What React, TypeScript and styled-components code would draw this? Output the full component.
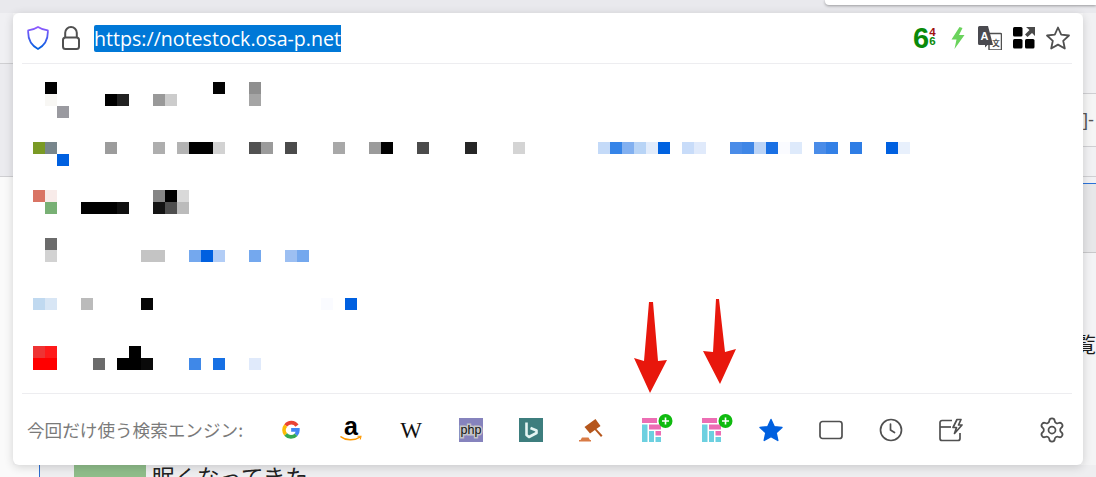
import styled, { createGlobalStyle } from "styled-components";
import { Settings } from "lucide-react";

const GlobalStyle = createGlobalStyle`
  html, body {
    margin: 0;
    padding: 0;
    width: 1096px;
    height: 477px;
    overflow: hidden;
    background: #f7f7f8;
    font-family: "Noto Sans", "Noto Sans CJK JP", sans-serif;
  }
`;

const Page = styled.div`
  position: relative;
  width: 1096px;
  height: 477px;
  overflow: hidden;
  display: flex;
  flex-direction: column;
`;

const TopStrip = styled.div`
  height: 13px;
  flex: none;
  background: #e9e9ed;
  display: flex;
  justify-content: flex-end;
`;

const TopTab = styled.div`
  width: 271px;
  height: 5px;
  background: #fff;
  border-bottom-left-radius: 4px;
  box-shadow: 0 1px 3px rgba(0, 0, 0, 0.35);
`;

const Middle = styled.div`
  flex: 1;
  display: flex;
  justify-content: space-between;
  min-height: 0;
`;

const LeftRail = styled.div`
  width: 13px;
  display: flex;
  flex-direction: column;
`;

const RightRail = styled.div`
  width: 13px;
  display: flex;
  flex-direction: column;
  font-family: "Liberation Sans", "Noto Sans CJK JP", sans-serif;
  background: #f4f4f5;
`;

const RailBand = styled.div<{ $h: number; $bg: string; $line?: string }>`
  height: ${(p) => p.$h}px;
  flex: none;
  box-sizing: border-box;
  background: ${(p) => p.$bg};
  border-bottom: ${(p) => (p.$line ? `1px solid ${p.$line}` : "none")};
  overflow: hidden;
`;

const RailBracket = styled.div`
  color: #555;
  font-size: 18px;
  line-height: 52px;
  white-space: nowrap;
`;

const RailGlyph = styled.div`
  color: #1c1c1c;
  font-size: 21px;
  line-height: 24px;
  margin-left: -8px;
  white-space: nowrap;
`;

const BottomStrip = styled.div`
  height: 12px;
  flex: none;
  display: flex;
  background: #eeeef0;
  overflow: hidden;
`;

const BottomLeft = styled.div`
  width: 40px;
  flex: none;
  box-sizing: border-box;
  background: #fafafa;
  border-right: 1px solid #2d6ed0;
`;

const Thumb = styled.div`
  width: 72px;
  height: 12px;
  margin-left: 34px;
  background: #8fbd8a;
  flex: none;
`;

const BottomText = styled.div`
  margin-left: 6px;
  font-size: 22.5px;
  line-height: 22px;
  color: #222;
  white-space: nowrap;
  font-family: "Noto Sans CJK JP", sans-serif;
`;

const Popup = styled.div`
  position: absolute;
  left: 13px;
  top: 13px;
  width: 1070px;
  height: 452px;
  box-sizing: border-box;
  padding: 0 11px 0 9px;
  background: #fff;
  border-radius: 6px;
  box-shadow: 0 2px 10px rgba(0, 0, 0, 0.16);
  display: flex;
  flex-direction: column;
`;

const Header = styled.div`
  height: 51px;
  flex: none;
  box-sizing: border-box;
  border-bottom: 1px solid #ededf0;
  display: flex;
  align-items: center;
  padding: 0 2px 0 5px;
`;

const ShieldSlot = styled.div`
  width: 22px;
  height: 24px;
  flex: none;
  margin-right: 13px;
`;

const LockSlot = styled.div`
  width: 18px;
  height: 24px;
  flex: none;
  margin-right: 14px;
`;

const UrlText = styled.span`
  background: #0078d7;
  color: #fff;
  font-size: 19.6px;
  line-height: 27px;
  height: 27px;
  white-space: nowrap;
  border-top-left-radius: 2px;
  border-bottom-left-radius: 2px;
  font-family: "Open Sans", sans-serif;
`;

const HeaderIcons = styled.div`
  margin-left: auto;
  display: flex;
  align-items: center;
`;

const Grade = styled.div`
  display: flex;
  width: 24px;
  height: 24px;
  margin-right: 9px;
  color: #0a8a0a;
  font-family: "Liberation Sans", sans-serif;
  font-weight: 700;
`;

const GradeBig = styled.span`
  font-size: 29px;
  line-height: 24px;
`;

const GradeSmall = styled.div`
  display: flex;
  flex-direction: column;
  font-size: 11.5px;
  line-height: 8.5px;
  padding-top: 2px;
`;

const GradeTop = styled.span`
  color: #a01010;
`;

const ToolIcon = styled.div<{ $mr?: number }>`
  width: 24px;
  height: 24px;
  flex: none;
  margin-right: ${(p) => p.$mr ?? 0}px;
  color: #505050;
`;

const Results = styled.div`
  flex: 1;
  min-height: 0;
  box-sizing: border-box;
  padding: 18px 0 0 11px;
`;

const Mosaic = styled.div`
  display: grid;
  grid-template-columns: repeat(74, 12px);
  grid-template-rows: repeat(24, 12px);
`;

// the blue run at the end of the second result sits 1px off the grid
const Tile = styled.div.attrs<{ $col: number; $row: number; $color: string }>((p) => ({
  style: {
    gridColumn: p.$col + 1,
    gridRow: p.$row + 1,
    background: p.$color,
    transform: p.$col >= 47 ? "translateX(1px)" : undefined,
  },
}))<{ $col: number; $row: number; $color: string }>``;

const Footer = styled.div`
  height: 72px;
  flex: none;
  box-sizing: border-box;
  border-top: 1px solid #ededf0;
  display: flex;
  align-items: center;
  padding: 0 6px 0 5px;
`;

const FooterLabel = styled.div`
  width: 252px;
  flex: none;
  font-size: 17.6px;
  color: #7a7a7a;
  white-space: nowrap;
  font-family: "Noto Sans CJK JP", sans-serif;
`;

const Engines = styled.div`
  display: flex;
  gap: 36px;
  align-items: center;
`;

const Engine = styled.div`
  width: 24px;
  height: 24px;
  flex: none;
  color: #505050;
  svg {
    display: block;
    overflow: visible;
  }
`;

const GearSlot = styled.div`
  margin-left: auto;
  width: 28px;
  height: 28px;
  color: #505050;
`;

const ArrowMark = styled.svg<{ $x: number; $y: number }>`
  position: absolute;
  left: ${(p) => p.$x}px;
  top: ${(p) => p.$y}px;
`;

// col, row on a 12px grid, starting at the first tile (33, 82)
const tiles: [number, number, string][] = [
  [1, 0, "#000"], [15, 0, "#030303"], [18, 0, "#8f8f8f"],
  [1, 1, "#f8f7f4"], [6, 1, "#000"], [7, 1, "#222"], [10, 1, "#999"], [11, 1, "#ccc"], [18, 1, "#a5a5a5"],
  [2, 2, "#9a9aa0"],

  [0, 5, "#7a9a25"], [1, 5, "#78868c"], [6, 5, "#9c9c9c"], [10, 5, "#aeaeae"], [12, 5, "#b3b3b3"],
  [13, 5, "#000"], [14, 5, "#000"], [15, 5, "#d2d2d2"], [18, 5, "#515151"], [19, 5, "#9b9b9b"],
  [21, 5, "#4b4b4b"], [25, 5, "#a8a8a8"], [28, 5, "#9b9b9b"], [29, 5, "#000"], [32, 5, "#4b4b4b"],
  [36, 5, "#262626"], [40, 5, "#d4d4d4"],
  [47, 5, "#c4daf8"], [48, 5, "#3584e8"], [49, 5, "#82b0f0"], [50, 5, "#b8d4f6"], [51, 5, "#e2ecfb"],
  [52, 5, "#0062e0"], [54, 5, "#c8dcf9"], [55, 5, "#e0eafb"], [58, 5, "#4a8ce8"], [59, 5, "#3f86e6"],
  [60, 5, "#bcd4f6"], [61, 5, "#1a70e4"], [62, 5, "#fafbff"], [63, 5, "#deeafb"], [65, 5, "#4a8ce8"],
  [66, 5, "#3380e6"], [68, 5, "#2e7de5"], [71, 5, "#0060e0"], [72, 5, "#e8f0fc"],
  [2, 6, "#0060e0"],

  [0, 9, "#d97464"], [1, 9, "#f8ebe9"], [10, 9, "#858585"], [11, 9, "#000"], [12, 9, "#d9d9d9"],
  [1, 10, "#78b074"], [4, 10, "#000"], [5, 10, "#000"], [6, 10, "#000"], [7, 10, "#0f0f0f"],
  [10, 10, "#131313"], [11, 10, "#4e4e4e"], [12, 10, "#bbb"],

  [1, 13, "#6b6b6b"],
  [1, 14, "#d2d2d2"], [9, 14, "#c4c4c4"], [10, 14, "#c4c4c4"], [13, 14, "#74a8ee"], [14, 14, "#0060e0"],
  [15, 14, "#b2cdf6"], [18, 14, "#74a8ee"], [21, 14, "#9cbff2"], [22, 14, "#74a8ee"],

  [0, 18, "#c0d9f0"], [1, 18, "#d8e6f5"], [4, 18, "#bbb"], [9, 18, "#060606"], [24, 18, "#fafbff"], [26, 18, "#0060e0"],

  [0, 22, "#ee3333"], [1, 22, "#ff1a1a"], [8, 22, "#000"],
  [0, 23, "#f00"], [1, 23, "#f00"], [5, 23, "#6b6b6b"], [7, 23, "#000"], [8, 23, "#000"], [9, 23, "#0a0a0a"],
  [13, 23, "#3f88e8"], [15, 23, "#1670e4"], [18, 23, "#e0eafb"],
];

const STAR_PATH = "M12 1.5 L15.2 8.6 L23 9.5 L17.2 14.8 L18.8 22.5 L12 18.6 L5.2 22.5 L6.8 14.8 L1 9.5 L8.8 8.6 Z";

function Shield() {
  return (
    <svg width="22" height="24" viewBox="0 0 22 24" fill="none">
      <defs>
        <linearGradient id="shieldGrad" x1="0" y1="0" x2="0" y2="1">
          <stop offset="0" stopColor="#9059ff" />
          <stop offset="1" stopColor="#0060df" />
        </linearGradient>
      </defs>
      <path
        d="M11 1 C8 3 4.5 4 1.2 4.3 C0.8 11 2.5 18.5 11 23 C19.5 18.5 21.2 11 20.8 4.3 C17.5 4 14 3 11 1 Z"
        stroke="url(#shieldGrad)"
        strokeWidth="1.8"
        strokeLinejoin="round"
      />
    </svg>
  );
}

function LockIcon() {
  return (
    <svg width="18" height="24" viewBox="0 0 18 24" fill="none" stroke="#505050" strokeWidth="2">
      <rect x="1" y="11.5" width="16" height="11.5" rx="2.5" />
      <path d="M3.2 11.5 V6.8 a5.8 5.8 0 0 1 11.6 0 V11.5" />
    </svg>
  );
}

function Bolt() {
  return (
    <svg width="24" height="24" viewBox="0 0 24 24">
      <path d="M13.5 1 L5.5 13.5 L10.5 13.5 L8.5 23 L18.5 9 L13 9 L16.5 2 Z" fill="#6ad35c" />
    </svg>
  );
}

function Translate() {
  return (
    <svg width="24" height="24" viewBox="0 0 24 24">
      <path d="M11 7.5 H22.5 a1 1 0 0 1 1 1 V23 a1 1 0 0 1 -1 1 H12 a1 1 0 0 1 -1 -1 Z" fill="#fff" stroke="#505050" strokeWidth="1.5" />
      <path d="M1.5 0 H10 L15 19 H9.5 L7 21.5 V19 H1.5 a1.5 1.5 0 0 1 -1.5 -1.5 V1.5 a1.5 1.5 0 0 1 1.5 -1.5 Z" fill="#4a4a50" />
      <text x="6.5" y="14" fontSize="11" fontWeight="700" fill="#fff" textAnchor="middle" fontFamily="Liberation Sans">A</text>
      <text x="18" y="20" fontSize="7.5" fontWeight="700" fill="#505050" textAnchor="middle" fontFamily="Noto Sans CJK JP">文</text>
    </svg>
  );
}

function QuickGrid() {
  return (
    <svg width="24" height="24" viewBox="0 0 24 24">
      <rect x="1" y="1" width="9.5" height="9.5" rx="1.5" fill="#000" />
      <rect x="1" y="13" width="9.5" height="9.5" rx="1.5" fill="#000" />
      <rect x="13" y="13" width="9.5" height="9.5" rx="1.5" fill="#000" />
      <path d="M14 1 H23 V10 L20 7 L15.5 11 L13 8.5 L17.5 4 Z" fill="#4a4a4a" />
    </svg>
  );
}

function OutlineStar() {
  return (
    <svg width="24" height="24" viewBox="0 0 24 24" fill="none">
      <path d={STAR_PATH} stroke="currentColor" strokeWidth="1.8" strokeLinejoin="round" />
    </svg>
  );
}

function GoogleIcon() {
  return (
    <svg width="24" height="24" viewBox="-4 -4 32 32" fill="none" strokeWidth="5">
      <path d="M20 6.2 A9.2 9.2 0 0 0 5 6" stroke="#ea4335" />
      <path d="M5 6 A9.2 9.2 0 0 0 5 18" stroke="#fbbc05" />
      <path d="M5 18 A9.2 9.2 0 0 0 18.8 18.2" stroke="#34a853" />
      <path d="M18.8 18.2 A9.2 9.2 0 0 0 21.1 11.9 H12.2" stroke="#4285f4" />
    </svg>
  );
}

function AmazonIcon() {
  return (
    <svg width="24" height="24" viewBox="0 0 24 24" fill="none">
      <text x="12" y="16.5" fontSize="25" fontWeight="700" fill="#000" textAnchor="middle" fontFamily="Liberation Sans">a</text>
      <path d="M2 18.8 C7 22.6 15 23 21 19.2" stroke="#f90" strokeWidth="1.5" strokeLinecap="round" />
      <path d="M18.5 18.2 L22 18.2 L21.3 21.5" stroke="#f90" strokeWidth="1.1" />
    </svg>
  );
}

function WikiIcon() {
  return (
    <svg width="24" height="24" viewBox="0 0 24 24">
      <text x="12" y="19.5" fontSize="23" fill="#111" textAnchor="middle" fontFamily="Liberation Serif">W</text>
    </svg>
  );
}

function PhpIcon() {
  return (
    <svg width="24" height="24" viewBox="0 0 24 24">
      <rect width="24" height="24" fill="#8683bd" />
      <text
        x="12"
        y="15.5"
        fontSize="12.5"
        fill="#111"
        stroke="#c4c4c8"
        strokeWidth="3"
        paintOrder="stroke"
        textAnchor="middle"
        fontFamily="Liberation Sans"
      >
        php
      </text>
    </svg>
  );
}

function BingIcon() {
  return (
    <svg width="24" height="24" viewBox="0 0 24 24" fill="none">
      <rect width="24" height="24" fill="#3d7e7e" />
      <path d="M7.5 4.5 V17 L10 19 L17.5 15 V12.5 L11.5 10" stroke="#e4f5f3" strokeWidth="2.6" strokeLinejoin="round" />
    </svg>
  );
}

function GavelIcon() {
  return (
    <svg width="24" height="24" viewBox="0 0 24 24" fill="#b5561c">
      <path d="M16.5 1 L21.5 8 L11 15.5 L5.5 9 Z" />
      <path d="M15 11 L16.5 10 L23.5 17.5 L22 19 Z" />
      <path d="M3 19.5 H9.5 L11 22 H12 V23.5 H0 V22 H1.5 Z" fill="#d97b45" />
    </svg>
  );
}

function NotesPlus() {
  return (
    <svg width="24" height="24" viewBox="0 0 24 24">
      <g transform="translate(3 0)">
        <rect x="0" y="0" width="15" height="5" fill="#ec6db3" />
        <rect x="0" y="6.5" width="5.5" height="17.5" fill="#6dd0e0" />
        <rect x="7" y="6.5" width="12" height="5" fill="#ec6db3" />
        <rect x="7" y="13" width="5" height="11" fill="#6dd0e0" />
        <rect x="13.5" y="13" width="5.5" height="4.5" fill="#ec6db3" />
        <rect x="13.5" y="19" width="5.5" height="5" fill="#6dd0e0" />
        <circle cx="23.5" cy="3" r="7" fill="#0fba0f" />
        <path d="M23.5 -0.5 V6.5 M20 3 H27" stroke="#fff" strokeWidth="1.6" />
      </g>
    </svg>
  );
}

function BlueStar() {
  return (
    <svg width="24" height="24" viewBox="0 0 24 24">
      <path d={STAR_PATH} fill="#0060df" stroke="#0060df" strokeWidth="1.4" strokeLinejoin="round" />
    </svg>
  );
}

function TabIcon() {
  return (
    <svg width="24" height="24" viewBox="0 0 24 24" fill="none">
      <rect x="1" y="3.5" width="22" height="17" rx="2.5" stroke="currentColor" strokeWidth="1.7" />
    </svg>
  );
}

function ClockIcon() {
  return (
    <svg width="24" height="24" viewBox="0 0 24 24" fill="none" stroke="currentColor" strokeWidth="1.7" strokeLinecap="round">
      <circle cx="12" cy="12" r="10.5" />
      <path d="M11.5 6 V12 L15.5 14.5" />
    </svg>
  );
}

function ActionIcon() {
  return (
    <svg width="24" height="24" viewBox="0 0 24 24" fill="none" stroke="currentColor" strokeWidth="1.7" strokeLinejoin="round">
      <path d="M13 2.5 H3 a2 2 0 0 0 -2 2 V20.5 a2 2 0 0 0 2 2 H19 a2 2 0 0 0 2 -2 V15" />
      <path d="M1 9 H12" />
      <path d="M18 1.5 L14 9.5 H17.5 L15.5 15.5 L23 7 H19.5 L22 1.5 Z" />
    </svg>
  );
}

export default function App() {
  return (
    <Page>
      <GlobalStyle />
      <TopStrip>
        <TopTab />
      </TopStrip>
      <Middle>
        <LeftRail>
          <RailBand $h={51} $bg="#f0f0f3" $line="#cfcfd2" />
          <RailBand $h={113} $bg="#ebebef" $line="#cfcfd2" />
          <RailBand $h={288} $bg="#fafafa" />
        </LeftRail>
        <RightRail>
          <RailBand $h={81} $bg="#f1f1f3" $line="#cfcfd2" />
          <RailBand $h={53} $bg="#f5f5f5" $line="#cfcfd2">
            <RailBracket>]-</RailBracket>
          </RailBand>
          <RailBand $h={30} $bg="#f1f1f3" $line="#cfcfd2" />
          <RailBand $h={6} $bg="#f1f1f3" />
          <RailBand $h={1} $bg="#2a72d8" />
          <RailBand $h={69} $bg="#e7e7e9" $line="#c8c8ca" />
          <RailBand $h={80} $bg="#f3f3f5" />
          <RailBand $h={24} $bg="#f3f3f5">
            <RailGlyph>覧</RailGlyph>
          </RailBand>
        </RightRail>
      </Middle>
      <BottomStrip>
        <BottomLeft />
        <Thumb />
        <BottomText>眠くなってきた</BottomText>
      </BottomStrip>

      <Popup>
        <Header>
          <ShieldSlot>
            <Shield />
          </ShieldSlot>
          <LockSlot>
            <LockIcon />
          </LockSlot>
          <UrlText>https://notestock.osa-p.net</UrlText>
          <HeaderIcons>
            <Grade>
              <GradeBig>6</GradeBig>
              <GradeSmall>
                <GradeTop>4</GradeTop>
                <span>6</span>
              </GradeSmall>
            </Grade>
            <ToolIcon $mr={8}>
              <Bolt />
            </ToolIcon>
            <ToolIcon $mr={10}>
              <Translate />
            </ToolIcon>
            <ToolIcon $mr={10}>
              <QuickGrid />
            </ToolIcon>
            <ToolIcon>
              <OutlineStar />
            </ToolIcon>
          </HeaderIcons>
        </Header>
        <Results>
          <Mosaic>
            {tiles.map(([col, row, color]) => (
              <Tile key={`${col}-${row}`} $col={col} $row={row} $color={color} />
            ))}
          </Mosaic>
        </Results>
        <Footer>
          <FooterLabel>今回だけ使う検索エンジン:</FooterLabel>
          <Engines>
            <Engine><GoogleIcon /></Engine>
            <Engine><AmazonIcon /></Engine>
            <Engine><WikiIcon /></Engine>
            <Engine><PhpIcon /></Engine>
            <Engine><BingIcon /></Engine>
            <Engine><GavelIcon /></Engine>
            <Engine><NotesPlus /></Engine>
            <Engine><NotesPlus /></Engine>
            <Engine><BlueStar /></Engine>
            <Engine><TabIcon /></Engine>
            <Engine><ClockIcon /></Engine>
            <Engine><ActionIcon /></Engine>
          </Engines>
          <GearSlot>
            <Settings size={28} strokeWidth={1.5} />
          </GearSlot>
        </Footer>
      </Popup>

      <ArrowMark $x={634} $y={301} width="34" height="94" viewBox="0 0 34 94">
        <path d="M15 1 H19 L24 60 L33 59 L16 92 L0 57 L10 60 Z" fill="#e8170c" />
      </ArrowMark>
      <ArrowMark $x={702} $y={298} width="35" height="92" viewBox="0 0 35 92">
        <path d="M14 1 H17 L23 54 L34 51 L18 86 L1 53 L11 54 Z" fill="#e8170c" />
      </ArrowMark>
    </Page>
  );
}
